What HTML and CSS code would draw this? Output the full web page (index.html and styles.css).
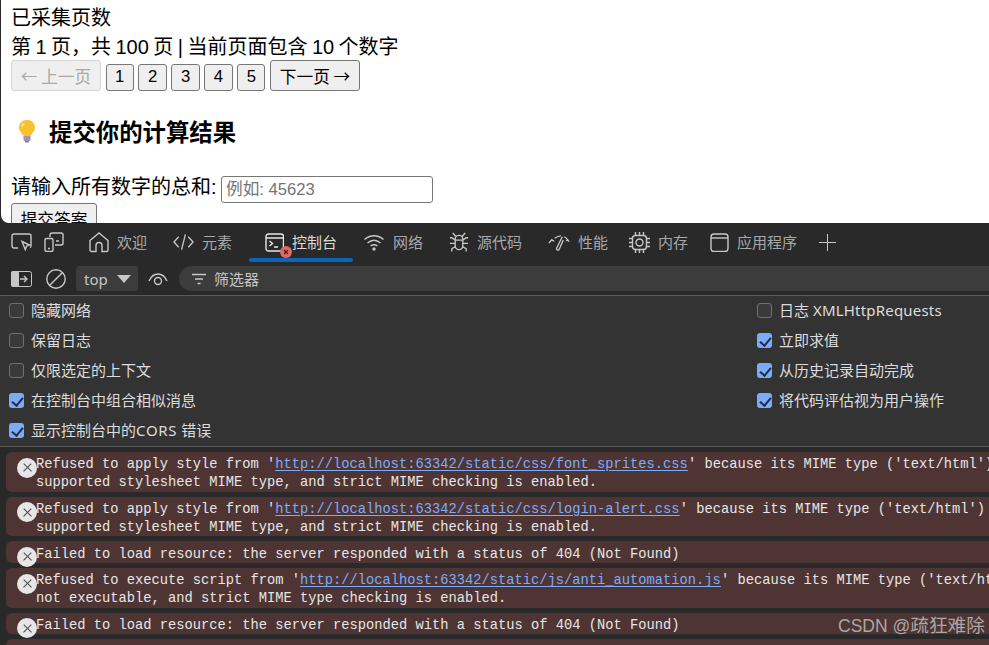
FILE: index.html
```html
<!DOCTYPE html>
<html lang="zh-CN">
<head>
<meta charset="utf-8">
<title>DevTools</title>
<link rel="stylesheet" href="styles.css">
</head>
<body>
<main class="page">
  <div class="line">已采集页数</div>
  <div class="line line-tight">第 1 页，共 100 页 | 当前页面包含 10 个数字</div>
  <nav class="pager">
    <button class="btn btn-wide" disabled>← 上一页</button>
    <button class="btn btn-num">1</button>
    <button class="btn btn-num">2</button>
    <button class="btn btn-num">3</button>
    <button class="btn btn-num">4</button>
    <button class="btn btn-num">5</button>
    <button class="btn btn-wide">下一页 →</button>
  </nav>
  <h3 class="title">
    <svg class="bulb" viewBox="0 0 20 24" width="20" height="24">
      <path class="bulb-glass" d="M10 1C5 1 2 4.500 2 8.500C2 12 4.500 13.500 6 16.500H14C15.500 13.500 18 12 18 8.500C18 4.500 15 1 10 1Z"/>
      <path class="bulb-shine" d="M6 4.500C4.800 5.600 4.300 7 4.500 8.500C5.500 7 6.500 6 8 5C7.500 4.500 6.800 4.200 6 4.500Z"/>
      <rect class="bulb-base" x="6.500" y="16.500" width="7" height="5.500" rx="1"/>
      <rect class="bulb-tip" x="8" y="22" width="4" height="1.500" rx=".7"/>
    </svg>
    <span>提交你的计算结果</span>
  </h3>
  <label class="field"><span>请输入所有数字的总和:</span><input class="input" type="text" placeholder="例如: 45623"></label>
  <button class="btn btn-submit">提交答案</button>
</main>

<section class="devtools">
  <header class="tabs">
    <svg class="ico" width="21" height="19" viewBox="0 0 21 19"><path d="M7 15H3a2 2 0 0 1-2-2V3a2 2 0 0 1 2-2h15a2 2 0 0 1 2 2v10a2 2 0 0 1-1 1.700"/><path d="M11 8.500l7.500 3.500-3 1.200-1.200 3.300z"/></svg>
    <svg class="ico ico-second" width="20" height="20" viewBox="0 0 20 20"><path d="M6 5V3a2 2 0 0 1 2-2h9a2 2 0 0 1 2 2v8a2 2 0 0 1-2 2h-6"/><rect x="1" y="6.500" width="8" height="13" rx="1.500"/><path d="M4 16.500h2M12 9h3"/></svg>
    <div class="tab tab-home">
      <svg class="ico" width="20" height="21" viewBox="0 0 20 21"><path d="M1 8.500L10 1l9 7.500V18a1.500 1.500 0 0 1-1.500 1.500H13v-6a3 3 0 0 0-6 0v6H2.500A1.500 1.500 0 0 1 1 18z"/></svg>
      <span>欢迎</span>
    </div>
    <div class="tab">
      <svg class="ico" width="21" height="18" viewBox="0 0 22 18"><path d="M6 3.500L1 9l5 5.500M16 3.500L21 9l-5 5.500M13 1L9 17"/></svg>
      <span>元素</span>
    </div>
    <div class="tab tab-active">
      <svg class="ico" width="19" height="19" viewBox="0 0 19 19"><rect x="1" y="1" width="17.500" height="17" rx="2.500"/><path d="M1 5h17.500M4.500 8l3 2.500-3 2.500M9 14h4"/></svg>
      <span class="badge"><svg width="6" height="6" viewBox="0 0 6 6"><path d="M1 1l4 4M5 1L1 5"/></svg></span>
      <span>控制台</span>
    </div>
    <div class="tab">
      <svg class="ico" width="22" height="17" viewBox="0 0 21 17"><path d="M1 5.500C6.500 .5 14.500 .5 20 5.500M4 9C8 5.500 13 5.500 17 9M7 12c2-1.500 5-1.500 7 0"/><circle class="fill" cx="10.500" cy="15" r="1.700"/></svg>
      <span>网络</span>
    </div>
    <div class="tab">
      <svg class="ico" width="20" height="22" viewBox="0 0 21 22"><path d="M6.500 8a4 4 0 0 1 8 0v7a4 4 0 0 1-8 0zM6.500 9h8M7 5L4 1.500M14 5l3-3.500M6.500 9L3 6.500H1M14.500 9L18 6.500h2M6.500 12.500H1M14.500 12.500H20M6.500 16L3 18v3M14.500 16l3.500 2v3"/></svg>
      <span>源代码</span>
    </div>
    <div class="tab">
      <svg class="ico" width="22" height="17" viewBox="0 0 23 17"><path d="M1 9L4 5.500 6.500 7.500M7 4C9 2.500 11 1.500 13.500 1.500M17 2.500C18.500 3.200 19.500 4.200 20.500 5.500L22 7.500M20.500 5.500L19 7M15 2.500L9 14.500a1.500 1.500 0 0 0 2.500 1.500L16 6"/></svg>
      <span>性能</span>
    </div>
    <div class="tab tab-chip">
      <svg class="ico" width="21" height="21" viewBox="0 0 21 21"><rect x="3.500" y="3.500" width="14" height="14" rx="3"/><circle cx="10.500" cy="10.500" r="3.500"/><path d="M6.500 0v3M10.500 0v3M14.500 0v3M6.500 18v3M10.500 18v3M14.500 18v3M0 6.500h3M0 10.500h3M0 14.500h3M18 6.500h3M18 10.500h3M18 14.500h3"/></svg>
      <span>内存</span>
    </div>
    <div class="tab tab-app">
      <svg class="ico" width="19" height="19" viewBox="0 0 19 19"><rect x="1" y="1" width="17" height="17.500" rx="3"/><path d="M1 5h17"/></svg>
      <span>应用程序</span>
    </div>
    <svg class="ico ico-plus" width="17" height="17" viewBox="0 0 17 17"><path d="M8.500 0v17M0 8.500h17"/></svg>
  </header>

  <div class="toolbar">
    <svg class="dock" width="21" height="16" viewBox="0 0 21 16"><path class="dock-side" d="M2 0h6v16H2a2 2 0 0 1-2-2V2a2 2 0 0 1 2-2z"/><rect class="dock-frame" x=".5" y=".5" width="20" height="15" rx="2"/><path class="dock-arrow" d="M9 8h7M13 5l3 3-3 3"/></svg>
    <svg class="ico ico-block" width="20" height="20" viewBox="0 0 20 20"><circle cx="10" cy="10" r="9.200"/><path d="M3.500 16.500L16.500 3.500"/></svg>
    <div class="context"><span>top</span><i class="tri"></i></div>
    <svg class="ico ico-eye" width="20" height="14" viewBox="0 0 20 14"><path d="M1 9C3 4.500 6 2 10 2s7 2.500 9 7"/><circle cx="10" cy="9" r="3.500"/></svg>
    <div class="filter">
      <svg class="ico" width="14" height="12" viewBox="0 0 14 12"><path d="M0 1.500h14M3 6h8M5.500 10.500h3"/></svg>
      <span>筛选器</span>
    </div>
  </div>

  <div class="settings">
    <div class="setting-col">
      <div class="setting"><i class="check"></i><span class="setting-text">隐藏网络</span></div>
      <div class="setting"><i class="check"></i><span class="setting-text">保留日志</span></div>
      <div class="setting"><i class="check"></i><span class="setting-text">仅限选定的上下文</span></div>
      <div class="setting"><i class="check on"></i><span class="setting-text">在控制台中组合相似消息</span></div>
      <div class="setting"><i class="check on"></i><span class="setting-text">显示控制台中的<span class="lat-cors">CORS</span> 错误</span></div>
    </div>
    <div class="setting-col">
      <div class="setting"><i class="check"></i><span class="setting-text">日志 <span class="lat-xhr">XMLHttpRequests</span></span></div>
      <div class="setting"><i class="check on"></i><span class="setting-text">立即求值</span></div>
      <div class="setting"><i class="check on"></i><span class="setting-text">从历史记录自动完成</span></div>
      <div class="setting"><i class="check on"></i><span class="setting-text">将代码评估视为用户操作</span></div>
    </div>
  </div>

  <div class="messages">
    <div class="msg msg-double"><span class="x"></span><div>Refused to apply style from '<a href="#">http://localhost:63342/static/css/font_sprites.css</a>' because its MIME type ('text/html') is not a</div><div>supported stylesheet MIME type, and strict MIME checking is enabled.</div></div>
    <div class="msg msg-double"><span class="x"></span><div>Refused to apply style from '<a href="#">http://localhost:63342/static/css/login-alert.css</a>' because its MIME type ('text/html') is not a</div><div>supported stylesheet MIME type, and strict MIME checking is enabled.</div></div>
    <div class="msg"><span class="x"></span><div>Failed to load resource: the server responded with a status of 404 (Not Found)</div></div>
    <div class="msg msg-double"><span class="x"></span><div>Refused to execute script from '<a href="#">http://localhost:63342/static/js/anti_automation.js</a>' because its MIME type ('text/html') is</div><div>not executable, and strict MIME type checking is enabled.</div></div>
    <div class="msg"><span class="x"></span><div>Failed to load resource: the server responded with a status of 404 (Not Found)</div></div>
    <div class="msg"></div>
  </div>
</section>
<div class="watermark"><span class="wm-latin">CSDN @</span><span class="wm-cjk">疏狂难除</span></div>
</body>
</html>
```
FILE: styles.css
```css
* { box-sizing: border-box; }
html, body { margin: 0; height: 645px; overflow: hidden; }
body {
  position: relative;
  width: 989px;
  background: #292929;
  font-family: "Liberation Sans", "Noto Sans CJK SC", sans-serif;
}

/* Page above the devtools */
.page {
  height: 223px;
  margin-left: 1px;
  padding: 4px 0 0 10px;
  overflow: hidden;
  background: #fff;
  border-bottom-left-radius: 8px;
  color: #000;
  font-size: 20px;
}
.line { line-height: 29px; height: 29px; }
.line-tight { word-spacing: -1.1px; }
.pager { display: flex; align-items: flex-end; gap: 4.6px; height: 31px; margin-top: -2px; }
.btn {
  margin: 0;
  padding: 0;
  border: 1px solid #767676;
  border-radius: 3px;
  background: #efefef;
  color: #000;
  font: 16.67px/1 "Liberation Sans", "Noto Sans CJK SC", sans-serif;
}
.btn-wide { width: 90px; height: 31px; padding-top: 2px; font-family: "Noto Sans CJK SC", sans-serif; }
.btn-num { width: 28.3px; height: 27px; }
.btn[disabled] { border-color: #d4d4d4; color: #a9a9a9; background: #efefef; }
.title {
  display: flex;
  align-items: center;
  gap: 12px;
  height: 28px;
  margin: 26px 0 0 6px;
  font-size: 23.4px;
  font-weight: 700;
}
.bulb { flex: none; }
.bulb-glass { fill: #fbc02d; }
.bulb-shine { fill: #fff3c4; }
.bulb-base { fill: #a393b5; }
.bulb-tip { fill: #7b6b8c; }
.field { display: flex; align-items: center; height: 27px; margin-top: 31px; line-height: 27px; }
.field span { width: 210px; margin-bottom: 5px; }
.input {
  width: 212px;
  height: 27px;
  padding: 0 4px;
  border: 1px solid #767676;
  border-radius: 3px;
  font: 16.67px "Liberation Sans", "Noto Sans CJK SC", sans-serif;
  background: #fff;
}
.input::placeholder { color: #757575; opacity: 1; }
.btn-submit { display: block; width: 86px; height: 31px; padding-top: 5px; }

/* Devtools */
.devtools { height: 422px; color: #c7c7c7; font-family: "Noto Sans", "Noto Sans CJK SC", sans-serif; font-size: 15px; }
.ico { flex: none; fill: none; stroke: #c7c7c7; stroke-width: 1.4; }
.ico .fill { fill: #c7c7c7; stroke: none; }
.tabs { display: flex; align-items: center; height: 39px; padding: 0 0 1px 11px; background: #292929; white-space: nowrap; }
.ico-second { margin-left: 12px; }
.tab { position: relative; display: flex; align-items: center; gap: 8px; margin-left: 26px; line-height: 22px; color: #a8a8a8; }
.tab-home { margin-left: 25px; }
.tab-active { margin-left: 33px; color: #dcdcdc; }
.tab-active .ico { stroke: #e6e6e6; }
.tab-active::after { content: ""; position: absolute; left: -16px; right: -16px; top: 27px; height: 4px; border-radius: 2px; background: #0b65bd; }
.tab-chip { margin-left: 21px; }
.tab-app { margin-left: 22px; }
.ico-plus { margin-left: 22px; stroke-width: 1; }
.badge {
  position: absolute;
  z-index: 1;
  left: 14.5px;
  top: 15px;
  display: flex;
  align-items: center;
  justify-content: center;
  width: 12px;
  height: 12px;
  border-radius: 50%;
  background: #e46962;
}
.badge path { fill: none; stroke: #3c1a18; stroke-width: 1.1; }

.toolbar { display: flex; align-items: center; height: 33px; padding: 4px 0 4px 11px; background: #292929; }
.dock { flex: none; }
.dock-side { fill: #c7c7c7; }
.dock-frame { fill: none; stroke: #c7c7c7; }
.dock-arrow { fill: none; stroke: #c7c7c7; stroke-width: 1.4; }
.ico-block { margin-left: 14px; }
.context { display: flex; align-items: center; gap: 9px; width: 62px; height: 25px; margin-left: 10px; padding-left: 8px; background: #3c3c3c; border-radius: 3px; color: #c7c7c7; }
.tri { width: 0; height: 0; border-left: 7px solid transparent; border-right: 7px solid transparent; border-top: 8px solid #c7c7c7; }
.ico-eye { margin-left: 10px; }
.filter { flex: 1; display: flex; align-items: center; gap: 8px; height: 25px; margin-left: 11px; padding-left: 13px; background: #3c3c3c; border-radius: 12.5px 0 0 12.5px; color: #c7c7c7; font-size: 15px; }

.settings { display: grid; grid-template-columns: 748px 1fr; height: 152px; padding-left: 9px; background: #333; border-top: 1px solid #5a5a5a; border-bottom: 1px solid #5a5a5a; color: #dcdcdc; }
.setting-col { margin-top: -0.5px; }
.setting { display: flex; align-items: center; gap: 7px; height: 30px; white-space: nowrap; }
.setting-text { margin-bottom: 3px; }
.lat-xhr { letter-spacing: .2px; }
.lat-cors { letter-spacing: .7px; }
.check { flex: none; width: 15px; height: 15px; border: 1.5px solid #707070; border-radius: 3px; background: #3a3a3a; position: relative; }
.check.on { border: 0; background: #7cacf8; }
.check.on::after { content: ""; position: absolute; left: 5px; top: 2px; width: 5px; height: 9px; border: solid #1f2c44; border-width: 0 2px 2px 0; transform: rotate(40deg); }

.messages { display: flex; flex-direction: column; gap: 5px; padding: 5px 0 0 6px; background: #292929; font: 13.75px/18px "Liberation Mono", monospace; color: #e6e6e6; }
.msg { position: relative; flex: none; height: 21.7px; padding: 4.3px 0 0 30px; background: #4e3534; border-radius: 6px 0 0 6px; white-space: pre; }
.msg-double { height: 39.7px; }
.msg a { color: #7cacf8; text-decoration: underline; text-underline-offset: 2px; }
.x {
  position: absolute;
  left: 11px;
  top: 5.6px;
  width: 20px;
  height: 20px;
  border-radius: 50%;
  background: #e6e6e6;
}
.x::before, .x::after { content: ""; position: absolute; left: 4.5px; top: 9.4px; width: 11px; height: 1.3px; background: #4a4a4a; }
.x::before { transform: rotate(45deg); }
.x::after { transform: rotate(-45deg); }

.watermark { position: absolute; left: 838px; top: 612px; color: rgba(190, 190, 190, .85); white-space: nowrap; line-height: 28px; font-family: "Liberation Sans", "Noto Sans CJK SC", sans-serif; }
.wm-latin { font-size: 17.5px; }
.wm-cjk { font-size: 18.7px; }
```
